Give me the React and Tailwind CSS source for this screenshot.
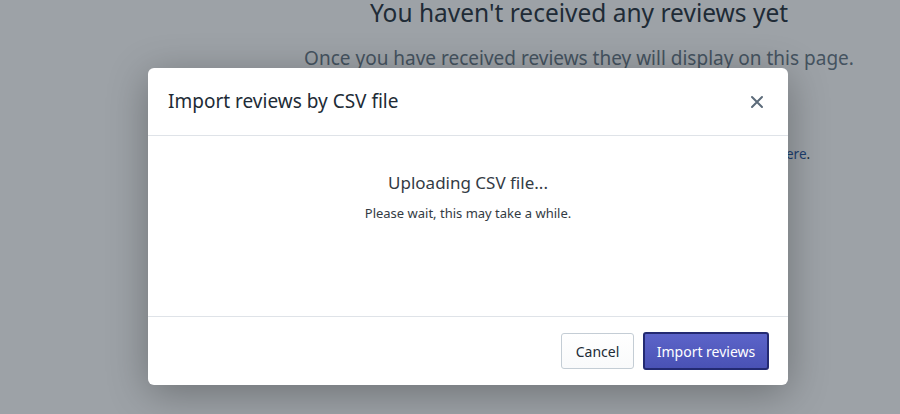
import React from 'react';

const font = { fontFamily: '"Noto Sans", "Open Sans", sans-serif' };

// The empty reviews page that sits behind the overlay
const EmptyPage = () => (
    <div className="flex min-h-screen bg-white">
        <div className="w-[258px] shrink-0" />
        <div className="flex-1 flex flex-col items-center pt-[1px]">
            <h1 className="text-[24.5px] leading-[24px] text-[#212b36]">You haven't received any reviews yet</h1>
            <p className="mt-[21px] text-[19px] leading-[24px] text-[#637381]">
                Once you have received reviews they will display on this page.
            </p>
            <p className="mt-[74px] text-[13.5px] leading-[20px] text-[#212b36]">
                You can also import your existing reviews from a CSV file by clicking <a className="text-[#1c4f9c]">here</a>.
            </p>
        </div>
    </div>
);

const CloseIcon = () => (
    <svg width="14" height="14" viewBox="0 0 14 14" fill="none">
        <path d="M2 2L12 12M12 2L2 12" stroke="#5c6b7a" strokeWidth="2" strokeLinecap="round" />
    </svg>
);

export default function App() {
    return (
        <div className="relative h-[414px] overflow-hidden" style={font}>
            <EmptyPage />

            {/* Overlay + modal */}
            <div className="absolute inset-0 bg-[#212b36]/44 pl-[148px] pt-[68px]">
                <div className="w-[640px] bg-white rounded-[6px] shadow-[0_8px_40px_rgba(0,0,0,0.3)] flex flex-col">
                    <div className="h-[68px] flex items-center justify-between pl-5 pr-[24px] border-b border-[#dfe3e8]">
                        <h2 className="text-[19px] text-[#212b36]">Import reviews by CSV file</h2>
                        <button className="p-0"><CloseIcon /></button>
                    </div>

                    <div className="h-[181px] flex flex-col items-center pt-[35px] border-b border-[#dfe3e8]">
                        <p className="text-[17px] leading-[24px] text-[#333b44]">Uploading CSV file...</p>
                        <p className="mt-[9px] text-[13px] leading-[18px] text-[#333b44]">Please wait, this may take a while.</p>
                    </div>

                    <div className="h-[68px] flex items-center justify-end gap-[9px] pr-[19px]">
                        <button className="h-[36px] w-[73px] rounded-[3px] border border-[#c4cdd5] bg-gradient-to-b from-white to-[#f9fafb] text-[14px] text-[#212b36]">
                            Cancel
                        </button>
                        <button className="h-[38px] w-[126px] rounded-[3px] border-2 border-[#232a72] bg-gradient-to-b from-[#5c64c9] to-[#4a52b5] text-[14px] text-white">
                            Import reviews
                        </button>
                    </div>
                </div>
            </div>
        </div>
    );
}
